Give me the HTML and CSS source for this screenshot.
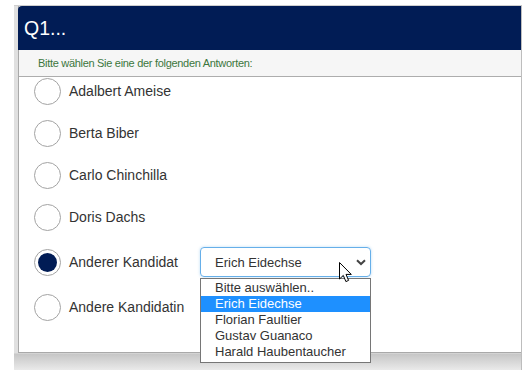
FILE: index.html
```html
<!DOCTYPE html>
<html lang="de">
<head>
<meta charset="utf-8">
<title>Q1</title>
<link rel="stylesheet" href="styles.css">
</head>
<body>
<div class="frame">
  <div class="card">
    <div class="q-head">Q1...</div>
    <div class="q-help">Bitte wählen Sie eine der folgenden Antworten:</div>
    <ul class="answers">
      <li class="answer"><span class="radio"></span><span class="label">Adalbert Ameise</span></li>
      <li class="answer"><span class="radio"></span><span class="label">Berta Biber</span></li>
      <li class="answer"><span class="radio"></span><span class="label">Carlo Chinchilla</span></li>
      <li class="answer"><span class="radio"></span><span class="label">Doris Dachs</span></li>
      <li class="answer answer-other">
        <span class="radio checked"></span><span class="label label-other">Anderer Kandidat</span>
        <div class="select-wrap">
          <div class="select">
            <span>Erich Eidechse</span>
            <svg class="chevron" width="10" height="7" viewBox="0 0 10 7"><path d="M1 1.2 L5 5 L9 1.2" fill="none" stroke="#444" stroke-width="2"/></svg>
          </div>
          <ul class="dropdown">
            <li class="opt">Bitte auswählen..</li>
            <li class="opt opt-active">Erich Eidechse</li>
            <li class="opt">Florian Faultier</li>
            <li class="opt">Gustav Guanaco</li>
            <li class="opt">Harald Haubentaucher</li>
          </ul>
          <svg class="cursor" width="14" height="22" viewBox="0 0 14 22"><path d="M0.5 0.5 L0.5 17 L4.3 13.4 L6.9 19.6 L9.6 18.4 L7 12.4 L12.3 12.4 Z" fill="#fff" stroke="#000" stroke-width="1" stroke-linejoin="miter"/></svg>
        </div>
      </li>
      <li class="answer"><span class="radio"></span><span class="label">Andere Kandidatin</span></li>
    </ul>
  </div>
</div>
</body>
</html>
```

FILE: styles.css
```css
html, body {
  margin: 0;
  padding: 0;
  background: #fff;
}
body {
  font-family: "Liberation Sans", Arial, sans-serif;
  color: #333;
  overflow: hidden;
  height: 370px;
}
.frame {
  margin: 5px 0 0 14px;
  height: 380px;
  box-sizing: border-box;
  width: 508px;
  padding-left: 4px;
  border-top: 1px solid #cfcfcf;
  border-right: 1px solid #bdbdbd;
  background: linear-gradient(to bottom, #e0e0e0 0, #e0e0e0 347px, #c6c6c6 348px, #eeeeee 366px, #f2f2f2 100%);
}
.card {
  background: #fff;
  border-left: 1px solid #a9a9a9;
  border-bottom: 1px solid #a9a9a9;
  height: 346px;
  position: relative;
}
.q-head {
  height: 44px;
  background: #011c55;
  color: #fff;
  font-size: 19.5px;
  line-height: 44px;
  border-top-left-radius: 4px;
  margin-left: -1px;
  padding-left: 6px;
}
.q-help {
  height: 26px;
  background: #f6f6f6;
  border-bottom: 1px solid #adadad;
  color: #3c763d;
  font-size: 11px;
  letter-spacing: -0.3px;
  line-height: 26px;
  padding-left: 19px;
}
.answers {
  list-style: none;
  margin: 0;
  padding: 0 0 0 15px;
  display: flex;
  flex-direction: column;
  gap: 14px;
}
.answer {
  display: flex;
  align-items: center;
  height: 28px;
}
.answer-other {
  height: 34px;
}
.radio {
  width: 25px;
  height: 25px;
  border: 1px solid #a3a3a3;
  border-radius: 50%;
  background: #fff;
  flex: none;
  position: relative;
}
.radio.checked::after {
  content: "";
  position: absolute;
  left: 3px;
  top: 3px;
  width: 19px;
  height: 19px;
  border-radius: 50%;
  background: #011c55;
}
.label {
  margin-left: 8px;
  font-size: 14px;
  color: #333;
}
.label-other {
  width: 131px;
  flex: none;
}
.select-wrap {
  position: relative;
}
.select {
  width: 171px;
  height: 30px;
  box-sizing: border-box;
  border: 1px solid #66afe9;
  border-radius: 4px;
  box-shadow: 0 0 3px rgba(102, 175, 233, 0.45);
  display: flex;
  align-items: center;
  padding-left: 14px;
  font-size: 13px;
  color: #333;
  position: relative;
}
.chevron {
  position: absolute;
  left: 155px;
  top: 11px;
}
.dropdown {
  position: absolute;
  left: 0;
  top: 31px;
  width: 171px;
  box-sizing: border-box;
  margin: 0;
  padding: 1px 0 2px;
  list-style: none;
  background: #fff;
  border: 1px solid #767676;
  z-index: 5;
}
.opt {
  height: 16px;
  line-height: 16px;
  font-size: 13px;
  padding-left: 14px;
  color: #333;
}
.opt-active {
  background: #1e90ff;
  color: #fff;
}
.cursor {
  position: absolute;
  left: 139px;
  top: 15px;
  z-index: 6;
}
```
